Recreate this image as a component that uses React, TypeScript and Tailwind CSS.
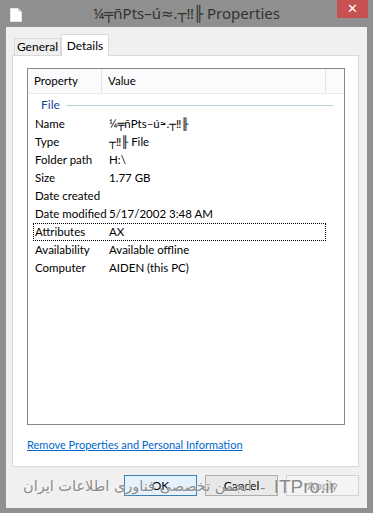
import React from "react";

const DBL = "\u203C\uFE0E";
const fname = `¼╤ñPts–ú≈.┬${DBL}╟`;

const rows: [string, string][] = [
  ["Name", fname],
  ["Type", `┬${DBL}╟ File`],
  ["Folder path", "H:\\"],
  ["Size", "1.77 GB"],
  ["Date created", ""],
  ["Date modified", "5/17/2002 3:48 AM"],
  ["Attributes", "AX"],
  ["Availability", "Available offline"],
  ["Computer", "AIDEN (this PC)"],
];

function PageIcon() {
  return (
    <svg width="12" height="14" viewBox="0 0 12 14" className="shrink-0">
      <path d="M0.5 0.5 H8 L11.5 4 V13.5 H0.5 Z" fill="#ffffff" stroke="#e6e6e6" />
      <path d="M8 0.5 V4 H11.5" fill="#dcdcdc" />
    </svg>
  );
}

function DialogButton({ label, focused, disabled }: { label: string; focused?: boolean; disabled?: boolean }) {
  return (
    <div
      className={
        "flex h-[21px] w-[73px] items-center justify-center border text-[12px] " +
        (focused
          ? "border-[#3c7fb1] bg-[#e5f1fb] text-black"
          : disabled
            ? "border-[#d2d2d2] bg-[#f4f4f4] text-[#a0a0a0]"
            : "border-[#acacac] bg-[#e8e8e8] text-black")
      }
    >
      {label}
    </div>
  );
}

export default function App() {
  return (
    <div
      className="relative h-[513px] w-[373px] overflow-hidden bg-[#8f8f8f] px-[6px] pb-[5px]"
      style={{ fontFamily: 'Lato, "Noto Sans", "DejaVu Sans", sans-serif' }}
    >
      {/* title bar */}
      <div className="relative flex h-[27px] items-center">
        <div className="pl-[4px] pt-[2px]">
          <PageIcon />
        </div>
        <div
          className="absolute inset-x-0 top-[2px] text-center text-[15px] text-[#333333]"
          style={{ fontFamily: '"Noto Sans", "DejaVu Sans", sans-serif' }}
        >
          {fname} Properties
        </div>
        <div className="absolute right-[-1px] top-0 flex h-[18px] w-[31px] items-center justify-center bg-[#c75050] text-[13px] font-bold text-white">
          ✕
        </div>
      </div>

      {/* client area */}
      <div className="flex h-[481px] flex-col bg-[#f0f0f0] px-[6px] pt-[7px]">
        {/* tabs */}
        <div className="relative z-10 flex h-[21px] items-end pl-[2px]">
          <div className="flex h-[17px] w-[47px] items-center justify-center border border-b-0 border-[#d9d9d9] bg-[#f0f0f0] text-[12px] text-black">
            General
          </div>
          <div className="mb-[-1px] flex h-[22px] w-[48px] items-start justify-center border border-b-0 border-[#d9d9d9] bg-white pt-[2px] text-[12px] text-black">
            Details
          </div>
        </div>

        {/* tab panel */}
        <div className="flex h-[412px] w-[347px] shrink-0 flex-col border border-[#d9d9d9] bg-white px-[14px] pt-[12px]">
          <div className="flex h-[357px] w-[318px] flex-col border border-[#828790] bg-white text-[11.5px] text-black">
            <div className="flex h-[25px] items-center border-b border-[#eaeaea] bg-[#fbfbfd]">
              <div className="flex h-full w-[74px] items-center border-r border-[#e5e5e5] pl-[6px]">Property</div>
              <div className="flex h-full w-[224px] items-center border-r border-[#e5e5e5] pl-[6px]">Value</div>
            </div>
            <div className="flex h-[21px] items-center pl-[13px] pr-[11px] pt-[1px]">
              <span className="text-[12px] text-[#1e3f9a]">File</span>
              <div className="ml-[6px] h-px flex-1 bg-[#bccfd9]" />
            </div>
            <div className="flex flex-col pl-[5px]">
              {rows.map(([k, v]) => (
                <div
                  key={k}
                  className={
                    "flex h-[18px] w-[293px] items-center border " +
                    (k === "Attributes" ? "border-dotted border-black" : "border-transparent")
                  }
                >
                  <div className="w-[75px] whitespace-nowrap pl-[1px]">{k}</div>
                  <div className="whitespace-nowrap">{v}</div>
                </div>
              ))}
            </div>
          </div>
          <div className="mt-[12px] text-[11px] text-[#0066cc] underline">Remove Properties and Personal Information</div>
        </div>

        {/* buttons */}
        <div className="mt-[8px] flex justify-end gap-[8px] pr-[2px]">
          <DialogButton label="OK" focused />
          <DialogButton label="Cancel" />
          <DialogButton label="Apply" disabled />
        </div>
      </div>

      {/* watermark */}
      <div
        className="pointer-events-none absolute left-[23px] top-[473px] flex items-center gap-[8px] whitespace-nowrap text-[#8a8a8a]"
        style={{ textShadow: "0 0 2px #ffffff" }}
      >
        <span style={{ fontFamily: '"DejaVu Sans", sans-serif' }} dir="rtl" className="text-[14.5px]">
          انجمن تخصصی فناوری اطلاعات ایران
        </span>
        <span className="text-[16px]">-</span>
        <span className="text-[19px]" style={{ fontFamily: '"Liberation Sans", sans-serif' }}>
          ITPro.ir
        </span>
      </div>
    </div>
  );
}
